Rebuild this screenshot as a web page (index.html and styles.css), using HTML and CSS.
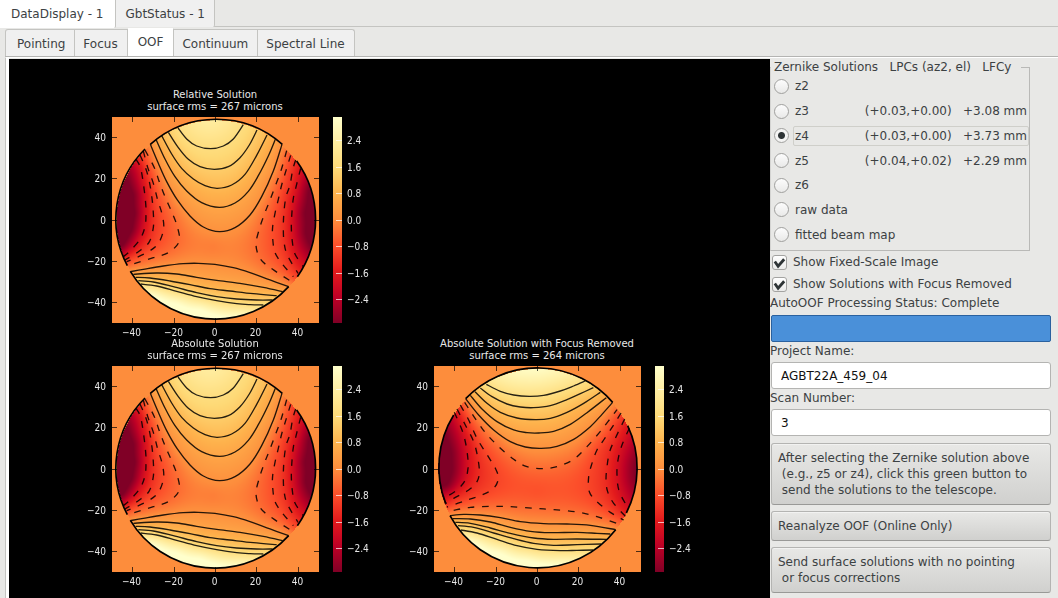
FILE: index.html
```html
<!DOCTYPE html>
<html lang="en">
<head>
<meta charset="utf-8">
<title>DataDisplay</title>
<link rel="stylesheet" href="styles.css">
</head>
<body>
<nav class="tabs tabs-outer" aria-label="Applications">
  <button class="tab active" type="button">DataDisplay - 1</button>
  <button class="tab" type="button">GbtStatus - 1</button>
</nav>
<nav class="tabs tabs-inner" aria-label="Displays">
  <button class="tab" type="button">Pointing</button>
  <button class="tab" type="button">Focus</button>
  <button class="tab active" type="button">OOF</button>
  <button class="tab" type="button">Continuum</button>
  <button class="tab" type="button">Spectral Line</button>
</nav>
<main class="workspace">
  <section class="plots" aria-label="Surface solutions">
    <figure class="plot" data-field="full">
      <figcaption>Relative Solution<br>surface rms = 267 microns</figcaption>
      <div class="chart"><canvas width="207" height="206"></canvas></div>
    </figure>
    <figure class="plot first-column" data-field="full">
      <figcaption>Absolute Solution<br>surface rms = 267 microns</figcaption>
      <div class="chart"><canvas width="207" height="206"></canvas></div>
    </figure>
    <figure class="plot" data-field="focus">
      <figcaption>Absolute Solution with Focus Removed<br>surface rms = 264 microns</figcaption>
      <div class="chart"><canvas width="207" height="206"></canvas></div>
    </figure>
  </section>
  <form class="controls">
    <fieldset class="solutions">
      <legend>Zernike Solutions   LPCs (az2, el)   LFCy</legend>
      <div class="options">
        <label class="option"><input type="radio" name="z"><span class="name">z2</span></label>
        <label class="option"><input type="radio" name="z"><span class="name">z3<span>(+0.03,+0.00)   +3.08 mm</span></span></label>
        <label class="option"><input type="radio" name="z" checked><span class="name current">z4<span>(+0.03,+0.00)   +3.73 mm</span></span></label>
        <label class="option"><input type="radio" name="z"><span class="name">z5<span>(+0.04,+0.02)   +2.29 mm</span></span></label>
        <label class="option"><input type="radio" name="z"><span class="name">z6</span></label>
        <label class="option"><input type="radio" name="z"><span class="name">raw data</span></label>
        <label class="option"><input type="radio" name="z"><span class="name">fitted beam map</span></label>
      </div>
    </fieldset>
    <label class="check"><span class="box"><input type="checkbox" checked><svg viewBox="0 0 16 16" aria-hidden="true"><path d="M3 7 6.5 12 13 4.5"/></svg></span>Show Fixed-Scale Image</label>
    <label class="check"><span class="box"><input type="checkbox" checked><svg viewBox="0 0 16 16" aria-hidden="true"><path d="M3 7 6.5 12 13 4.5"/></svg></span>Show Solutions with Focus Removed</label>
    <p class="caption" id="status">AutoOOF Processing Status: Complete</p>
    <div class="progress" role="progressbar" aria-labelledby="status" aria-valuenow="100"></div>
    <label class="caption" for="project">Project Name:</label>
    <input class="field" id="project" type="text" value="AGBT22A_459_04">
    <label class="caption" for="scan">Scan Number:</label>
    <input class="field" id="scan" type="text" value="3">
    <button class="action" type="button">After selecting the Zernike solution above
 (e.g., z5 or z4), click this green button to
 send the solutions to the telescope.</button>
    <button class="action" type="button">Reanalyze OOF (Online Only)</button>
    <button class="action" type="button">Send surface solutions with no pointing
 or focus corrections</button>
  </form>
</main>
<script src="plots.js"></script>
</body>
</html>
```
FILE: styles.css
```css
* { box-sizing: border-box; }
html, body { height: 100%; }
body {
  margin: 0;
  display: flex;
  flex-direction: column;
  overflow: hidden;
  background: #e8e8e6;
  color: #3c4143;
  font: 12px/16px "DejaVu Sans", sans-serif;
}
button, input { font: inherit; color: inherit; margin: 0; }

.tabs { display: flex; align-items: flex-end; flex: none; }
.tab {
  background: #f0f0f0;
  border: 1px solid #c4c4c1;
  border-left: 0;
  border-bottom: 0;
  padding: 0 8px;
  white-space: nowrap;
}
.tab.active { background: #fff; border-color: #fff; }
.tabs-outer { height: 28px; align-items: flex-start; background: linear-gradient(#c4c4c1, #c4c4c1) 0 26px / 100% 1px no-repeat; }
.tabs-outer .tab { height: 27px; padding: 0 9px; border-top: 0; border-radius: 0 0 2px 0; }
.tabs-outer .tab.active { height: 28px; padding: 0 12px 0 11px; border-right-color: #c4c4c1; }
.tabs-inner { height: 30px; padding-left: 5px; }
.tabs-inner .tab { height: 29px; padding: 0 9px 0 8px; border-bottom: 1px solid #b4b4b2; }
.tabs-inner .tab:first-child { border-left: 1px solid #c4c4c1; border-radius: 3px 0 0 0; padding-left: 11px; }
.tabs-inner .tab:last-child { border-radius: 0 3px 0 0; }
.tabs-inner .tab.active { height: 30px; padding: 0 10px 2px; border-color: #fff #c4c4c1 #fff #fff; }

.workspace {
  flex: 1;
  min-height: 0;
  display: grid;
  grid-template-columns: minmax(0, 1fr) 281px;
  margin-left: 5px;
  padding: 1px 7px 0 3px;
  border-left: 1px solid #c4c4c1;
  border-top: 1px solid #fff;
  box-shadow: inset 3px 0 #fff, 0 -1px #b4b4b2;
  margin-top: -1px;
}
.plots {
  background: #000;
  padding: 30px 0 0 75px;
  display: grid;
  grid-template-columns: 322px 322px;
  grid-template-rows: 249px 249px;
  align-content: start;
}
.first-column { grid-column: 1; }
.plot {
  margin: 0;
  width: 300px;
  color: #e8e8e8;
  font-size: 10px;
  line-height: 12px;
}
.plot figcaption { width: 262px; text-align: center; white-space: nowrap; }
.chart { display: grid; }
.chart canvas, .chart svg { grid-area: 1 / 1; display: block; }
.chart canvas { margin: 4px 0 0 28px; }
.chart svg { width: 300px; height: 224px; overflow: visible; }
.tick-label { fill: #e8e8e8; font: 10px "DejaVu Sans Condensed", "DejaVu Sans", sans-serif; font-stretch: condensed; }
.end { text-anchor: end; }
.middle { text-anchor: middle; }
.contour { fill: none; stroke: #000; stroke-opacity: .85; stroke-width: 4; }
.dashed { stroke-dasharray: 20 23; }
.rim { fill: none; stroke: #000; stroke-width: 5; }
.tick { stroke: #000; stroke-opacity: .7; stroke-width: 1; }
.bar-tick { stroke: #fff; stroke-opacity: .7; stroke-width: 1; }

.controls { display: flex; flex-direction: column; }
.solutions {
  margin: 0 21px 0 0;
  padding: 0;
  border: 1px solid #b9b9b7;
  border-left-color: #d4d4d2;
  min-width: 0;
}
.solutions legend { padding: 0 10px 0 3px; white-space: pre; }
.options { display: flex; flex-direction: column; height: 173px; margin: -1px 0 3px; }
.option { flex: 1; display: flex; align-items: center; gap: 4px; padding-left: 3px; }
.option input {
  appearance: none;
  flex: none;
  width: 15px;
  height: 15px;
  border: 1px solid #a0a09e;
  border-radius: 50%;
  background: linear-gradient(#fcfcfc, #e9e9e8);
}
.option input:checked { background: radial-gradient(circle, #2e3436 0 3px, transparent 4px), #f4f4f3; }
.name { flex: 1; display: flex; justify-content: space-between; padding: 1px; border: 1px solid transparent; white-space: pre; }
.current { border-color: #cfcfca; border-radius: 2px; }
.check { display: flex; align-items: center; gap: 6px; height: 22px; padding-left: 2px; white-space: nowrap; }
.box { display: grid; width: 15px; height: 15px; }
.box input, .box svg { grid-area: 1 / 1; }
.box input {
  appearance: none;
  width: 15px;
  height: 15px;
  border: 1px solid #a3a3a1;
  border-radius: 3px;
  background: linear-gradient(#fff, #ebebea);
}
.box svg { width: 15px; height: 15px; fill: none; stroke: #2e3436; stroke-width: 3; pointer-events: none; }
.caption { margin: 0; line-height: 16px; }
.progress { height: 27px; margin: 4px 0 1px 1px; border: 1px solid #2a619f; border-radius: 2px; background: #4a90d9; }
.field {
  height: 27px;
  margin: 3px 0 1px 1px;
  padding: 0 9px;
  border: 1px solid #b4b4b2;
  border-radius: 3px;
  background: #fff;
  color: #111;
}
.action {
  margin: 6px 0 0 1px;
  padding: 6px;
  text-align: left;
  white-space: pre;
  border: 1px solid #b4b4b2;
  border-bottom-color: #999997;
  border-radius: 3px;
  background: linear-gradient(#e8e8e6, #d0d0ce);
  box-shadow: inset 0 1px #f2f2f1;
}
```
FILE: plots.js
```js
// Contour points and surface values. Points are in thirds of a pixel.
const FIELDS = {
  full: {
    shift: 0, center: [378, 419],
    lines: [
      [0.1, [181,193, 205,250, 230,305, 262,360, 300,408, 340,441, 388,455, 435,443, 480,405, 515,350, 550,273, 576,193]],
      [0.5, [198,178, 225,237, 255,290, 290,333, 335,368, 388,382, 435,369, 475,334, 505,287, 535,228, 556,178]],
      [0.9, [215,167, 245,222, 275,265, 310,297, 345,317, 382,325, 425,315, 465,283, 500,226, 531,165]],
      [1.3, [235,157, 265,203, 295,238, 330,260, 373,268, 415,260, 450,233, 478,195, 501,150]],
      [1.7, [264,144, 290,177, 320,198, 362,206, 400,198, 430,177, 460,134]],
      [-0.4, [165,210, 193,263, 207,303, 225,350, 245,395, 262,440, 267,485, 235,518, 190,533, 120,555]],
      [-0.8, [160,213, 173,262, 190,310, 203,360, 216,402, 221,445, 205,490, 170,518, 110,545]],
      [-1.2, [150,225, 167,265, 178,305, 186,355, 190,400, 190,442, 177,487, 145,515, 105,540]],
      [-1.7, [138,238, 151,262, 160,310, 167,370, 168,405, 165,440, 150,478, 118,515, 100,530]],
      [-0.4, [590,212, 573,272, 557,315, 540,360, 523,403, 508,447, 498,495, 512,538, 548,568, 600,602]],
      [-0.8, [602,226, 588,272, 575,315, 565,358, 555,400, 548,440, 548,475, 555,518, 577,552, 610,590]],
      [-1.2, [617,240, 608,270, 600,315, 588,350, 582,395, 580,440, 582,485, 592,525, 624,580]],
      [-1.7, [632,265, 617,325, 610,355, 606,395, 604,440, 607,485, 615,522, 640,560]],
      [0.1, [121,575, 160,568, 220,558, 280,551, 325,550, 375,553, 430,563, 480,578, 540,600, 596,620]],
      [0.5, [130,583, 200,579, 260,582, 320,592, 380,601, 450,610, 520,622, 578,635]],
      [0.9, [137,592, 180,594, 240,603, 300,614, 360,626, 420,633, 490,641, 560,647]],
      [1.3, [145,602, 190,606, 250,620, 320,638, 380,650, 440,657, 500,660, 548,660]],
      [1.7, [152,612, 200,618, 260,634, 320,650, 380,662, 440,671, 480,674, 520,675]]
    ],
    samples: [[-3.1, [110,290, 133,345, 138,400, 128,450, 100,500]], [-3.6, [84,400, 90,460, 90,340]],
      [-3.1, [655,330, 641,400, 645,460, 660,495]], [-3.4, [673,410]],
      [2.3, [370,123]], [3.1, [185,645, 260,670, 330,688]], [3.6, [250,700, 320,712]], [2.7, [460,700]],
      [-0.2, [370,500]]],
    rims: [[181,193, 577,193], [620,243, 622,590], [596,620, 121,574], [112,557, 165,207]]
  },
  focus: {
    shift: -5, center: [382, 418],
    lines: [
      [0.1, [166,209, 205,258, 250,303, 300,338, 345,354, 393,358, 440,352, 490,331, 540,293, 575,256, 607,220]],
      [0.5, [180,199, 215,240, 260,278, 310,303, 350,311, 385,312, 430,307, 480,286, 530,251, 588,206]],
      [0.9, [194,188, 230,223, 270,250, 320,267, 375,272, 420,268, 470,250, 520,223, 570,190]],
      [1.3, [210,177, 245,203, 290,225, 330,234, 370,236, 420,230, 470,212, 510,194, 549,176]],
      [1.8, [228,166, 270,187, 310,198, 357,202, 400,199, 450,186, 490,171, 525,156]],
      [-0.4, [163,220, 215,298, 260,348, 310,391, 350,413, 395,419, 440,413, 490,391, 530,353, 575,301, 620,242]],
      [-0.4, [130,544, 180,535, 240,532, 300,533, 370,538, 430,542, 500,549, 560,563, 622,584]],
      [-0.9, [150,228, 175,273, 200,328, 232,380, 255,418, 264,448, 250,478, 215,498, 165,515, 110,534]],
      [-1.3, [140,240, 165,288, 190,338, 202,385, 207,428, 200,458, 175,483, 130,508, 104,525]],
      [-1.8, [132,250, 155,303, 167,348, 173,393, 173,418, 165,453, 140,483, 100,508]],
      [-0.9, [632,252, 610,288, 580,333, 560,363, 545,403, 535,443, 537,488, 560,518, 600,550, 640,573]],
      [-1.3, [643,270, 615,328, 598,368, 590,413, 587,453, 592,488, 610,523, 645,562]],
      [-1.8, [657,298, 635,348, 623,393, 620,438, 627,488, 655,540]],
      [0.1, [119,560, 160,556, 210,558, 270,566, 330,578, 400,584, 470,585, 540,589, 616,602]],
      [0.5, [127,569, 180,570, 240,579, 300,595, 360,607, 420,611, 500,610, 560,613, 600,615]],
      [0.9, [135,580, 180,583, 240,597, 300,613, 370,627, 430,631, 500,630, 588,631]],
      [1.3, [143,590, 190,595, 250,612, 310,629, 370,643, 430,649, 500,647, 572,645]],
      [1.7, [152,603, 200,612, 260,631, 320,650, 380,661, 450,665, 500,664, 548,663]]
    ],
    samples: [[-3.1, [105,315, 125,370, 127,420, 112,470]], [-3.5, [88,400, 90,440]],
      [-2.9, [668,400, 668,450]], [2.9, [380,125]], [-0.75, [380,490]],
      [3.1, [185,640, 270,672, 350,695]], [3.6, [250,700, 320,712]], [2.8, [460,698]]],
    rims: [[166,209, 607,220], [652,290, 648,552], [616,602, 119,560], [106,523, 130,258]]
  }
};

const STOPS = [[128,0,38],[189,0,38],[227,26,28],[252,78,42],[253,141,60],[254,178,76],[254,217,118],[255,237,160],[255,255,204]];
const LIMIT = 3.1;

function color(v) {
  const t = Math.max(0, Math.min(7.9999, (v + LIMIT) / (2 * LIMIT) * 8));
  const i = Math.floor(t), f = t - i;
  return STOPS[i].map((c, k) => c + (STOPS[i + 1][k] - c) * f);
}

function pairs(flat) {
  const out = [];
  for (let i = 0; i < flat.length; i += 2) out.push([flat[i], flat[i + 1]]);
  return out;
}

// Catmull-Rom spline as cubic segments
function spline(flat) {
  const p = pairs(flat);
  let d = `M${p[0]}`;
  for (let i = 0; i < p.length - 1; i++) {
    const a = p[i - 1] || p[i], b = p[i], c = p[i + 1], e = p[i + 2] || c;
    d += `C${b[0] + (c[0] - a[0]) / 6} ${b[1] + (c[1] - a[1]) / 6} ${c[0] - (e[0] - b[0]) / 6} ${c[1] - (e[1] - b[1]) / 6} ${c[0]} ${c[1]}`;
  }
  return d;
}

const kernel = r2 => r2 > 0 ? r2 * Math.log(r2) : 0;

// Thin-plate fit through all contour points
function fit(field) {
  const pts = [];
  for (const [v, flat] of field.lines.concat(field.samples))
    for (const [x, y] of pairs(flat)) pts.push([x / 300, y / 300, v]);
  const n = pts.length, m = n + 3;
  const A = Array.from({ length: m }, () => new Float64Array(m + 1));
  for (let i = 0; i < n; i++) {
    for (let j = 0; j < n; j++) A[i][j] = kernel((pts[i][0] - pts[j][0]) ** 2 + (pts[i][1] - pts[j][1]) ** 2);
    A[i][i] += 0.012;
    [1, pts[i][0], pts[i][1]].forEach((q, k) => { A[i][n + k] = q; A[n + k][i] = q; });
    A[i][m] = pts[i][2];
  }
  for (let c = 0; c < m; c++) {
    let best = c;
    for (let r = c + 1; r < m; r++) if (Math.abs(A[r][c]) > Math.abs(A[best][c])) best = r;
    [A[c], A[best]] = [A[best], A[c]];
    for (let r = c + 1; r < m; r++) {
      const f = A[r][c] / A[c][c];
      if (f) for (let k = c; k <= m; k++) A[r][k] -= f * A[c][k];
    }
  }
  const w = new Float64Array(m);
  for (let r = m - 1; r >= 0; r--) {
    let s = A[r][m];
    for (let k = r + 1; k < m; k++) s -= A[r][k] * w[k];
    w[r] = s / A[r][r];
  }
  return (x, y) => {
    x /= 300; y /= 300;
    let s = w[n] + w[n + 1] * x + w[n + 2] * y;
    for (let i = 0; i < n; i++) s += w[i] * kernel((x - pts[i][0]) ** 2 + (y - pts[i][1]) ** 2);
    return s;
  };
}

function image(field) {
  const value = fit(field), img = new ImageData(207, 206);
  for (let j = 0; j < 206; j++) for (let i = 0; i < 207; i++) {
    const x = 67.5 + 3 * i - field.shift, y = 112.5 + 3 * j;
    const inside = Math.hypot(x - field.center[0], y - field.center[1]) < 298;
    const rgb = color(inside ? value(x, y) : 0), o = (j * 207 + i) * 4;
    img.data.set([rgb[0], rgb[1], rgb[2], 255], o);
  }
  return img;
}

function overlay(field, id) {
  let s = `<svg viewBox="-6 33 300 224"><defs><linearGradient id="${id}" x1="0" y1="1" x2="0" y2="0">`;
  STOPS.forEach((c, i) => { s += `<stop offset="${i / 8}" stop-color="rgb(${c})"/>`; });
  s += `</linearGradient></defs><g transform="translate(${field.shift / 3} 0) scale(.33333)">`;
  for (const [v, flat] of field.lines) s += `<path class="contour${v < 0 ? ' dashed' : ''}" d="${spline(flat)}"/>`;
  for (const r of field.rims) s += `<path class="rim" d="M${r[0]} ${r[1]}A298 298 0 0 1 ${r[2]} ${r[3]}"/>`;
  s += '</g>';
  [-40, -20, 0, 20, 40].forEach((v, i) => {
    const x = [42.5, 84.5, 125.5, 166.5, 208.5][i], y = [222.5, 181.5, 140.5, 98.5, 57.5][i];
    const t = String(v).replace('-', '\u2212');
    s += `<path class="tick" d="M${x} 37v5M${x} 243v-5M22 ${y}h5M229 ${y}h-5"/>`;
    s += `<text class="tick-label middle" x="${x - 1}" y="256">${t}</text><text class="tick-label end" x="16" y="${y + 3.5}">${t}</text>`;
  });
  s += `<rect x="243" y="37" width="9" height="206" fill="url(#${id})"/>`;
  ['2.4', '1.6', '0.8', '0.0', '\u22120.8', '\u22121.6', '\u22122.4'].forEach((t, i) => {
    const y = [60.5, 87.5, 113.5, 140.5, 166.5, 193.5, 219.5][i];
    s += `<path class="bar-tick" d="M246 ${y}h6"/><text class="tick-label" x="257" y="${y + 3.5}">${t}</text>`;
  });
  return s + '</svg>';
}

const images = {};
document.querySelectorAll('.plot').forEach((plot, i) => {
  const key = plot.dataset.field;
  images[key] = images[key] || image(FIELDS[key]);
  plot.querySelector('canvas').getContext('2d').putImageData(images[key], 0, 0);
  plot.querySelector('.chart').insertAdjacentHTML('beforeend', overlay(FIELDS[key], 'scale' + i));
});
```
